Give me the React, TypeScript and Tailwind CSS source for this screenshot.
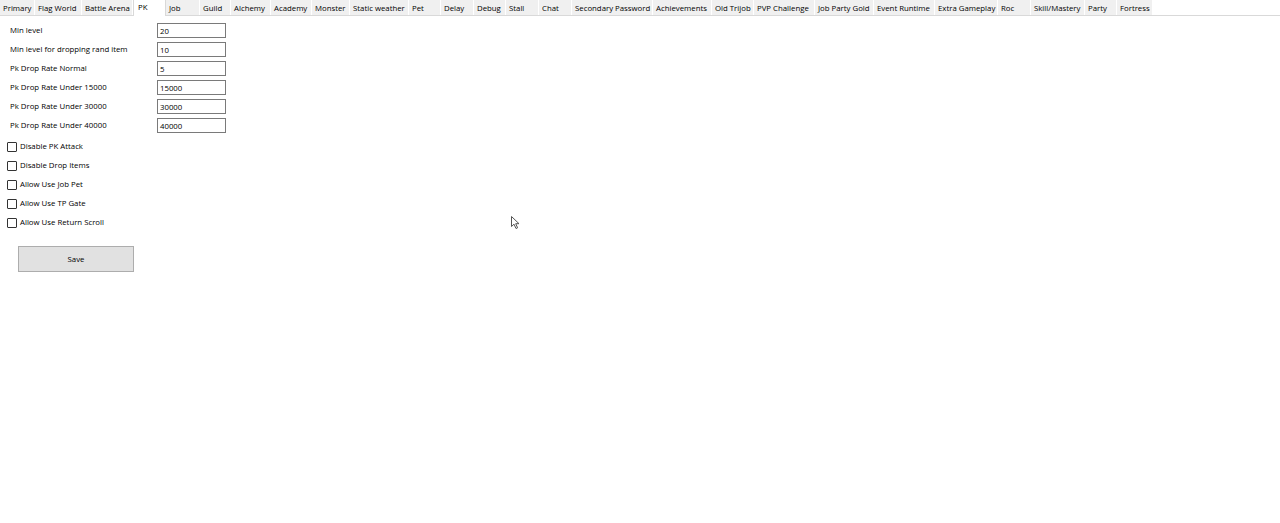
import React from "react";

const tabs: [string, number][] = [
  ["Primary", 35],
  ["Flag World", 47],
  ["Battle Arena", 51],
  ["PK", 33],
  ["Job", 34],
  ["Guild", 31],
  ["Alchemy", 40],
  ["Academy", 41],
  ["Monster", 38],
  ["Static weather", 59],
  ["Pet", 32],
  ["Delay", 33],
  ["Debug", 32],
  ["Stall", 33],
  ["Chat", 33],
  ["Secondary Password", 81],
  ["Achievements", 59],
  ["Old Trijob", 42],
  ["PVP Challenge", 61],
  ["Job Party Gold", 59],
  ["Event Runtime", 61],
  ["Extra Gameplay", 63],
  ["Roc", 33],
  ["Skill/Mastery", 54],
  ["Party", 32],
  ["Fortress", 36],
];

const fields: [string, string][] = [
  ["Min level", "20"],
  ["Min level for dropping rand item", "10"],
  ["Pk Drop Rate Normal", "5"],
  ["Pk Drop Rate Under 15000", "15000"],
  ["Pk Drop Rate Under 30000", "30000"],
  ["Pk Drop Rate Under 40000", "40000"],
];

const checks = [
  "Disable PK Attack",
  "Disable Drop Items",
  "Allow Use Job Pet",
  "Allow Use TP Gate",
  "Allow Use Return Scroll",
];

export default function App() {
  return (
    <div
      className="relative w-[1280px] h-[523px] bg-white text-black font-medium overflow-hidden"
      style={{ fontFamily: '"Open Sans", "Noto Sans", sans-serif' }}
    >
      <div className="flex h-[16px] border-b border-[#d9d9d9] text-[7.8px] leading-[17px]">
        {tabs.map(([t, w]) => {
          const sel = t === "PK";
          return (
            <div
              key={t}
              style={{ width: w }}
              className={
                sel
                  ? "shrink-0 bg-white pl-[4px] h-[16px] -mb-[1px] border-l border-r border-[#d9d9d9] whitespace-nowrap leading-[15px]"
                  : "shrink-0 bg-[#f0f0f0] pl-[3px] h-[15px] border-r border-white whitespace-nowrap"
              }
            >
              {t}
            </div>
          );
        })}
      </div>

      <div className="flex flex-col pt-[5px]">
        {fields.map(([l, v]) => (
          <div key={l} className="flex items-center h-[19px]">
            <div className="w-[157px] pl-[10px] pt-[1px] text-[7.8px] whitespace-nowrap">{l}</div>
            <div className="w-[69px] h-[15px] border border-[#7a7a7a] bg-white pl-[2px] text-[7.8px] leading-[14px]">
              {v}
            </div>
          </div>
        ))}
      </div>

      <div className="flex flex-col mt-[2px]">
        {checks.map((c) => (
          <div key={c} className="flex items-center h-[19px] pl-[7px]">
            <div className="w-[10px] h-[10px] border border-[#333] bg-white rounded-[1px]" />
            <div className="ml-[3px] pt-[1px] text-[7.8px] whitespace-nowrap">{c}</div>
          </div>
        ))}
      </div>

      <div className="pl-[18px] mt-[14px]">
        <div className="w-[116px] h-[26px] bg-[#e1e1e1] border border-[#adadad] flex items-center justify-center pt-[1px] text-[7.8px]">
          Save
        </div>
      </div>

      <svg
        className="absolute left-[511px] top-[216px]"
        width="10"
        height="14"
        viewBox="0 0 10 14"
      >
        <path
          d="M0.5 0.5 L0.5 10.5 L3 8.2 L5 12.5 L6.6 11.8 L4.7 7.7 L8 7.7 Z"
          fill="white"
          stroke="#555"
          strokeWidth="1"
          strokeLinejoin="round"
        />
      </svg>
    </div>
  );
}
